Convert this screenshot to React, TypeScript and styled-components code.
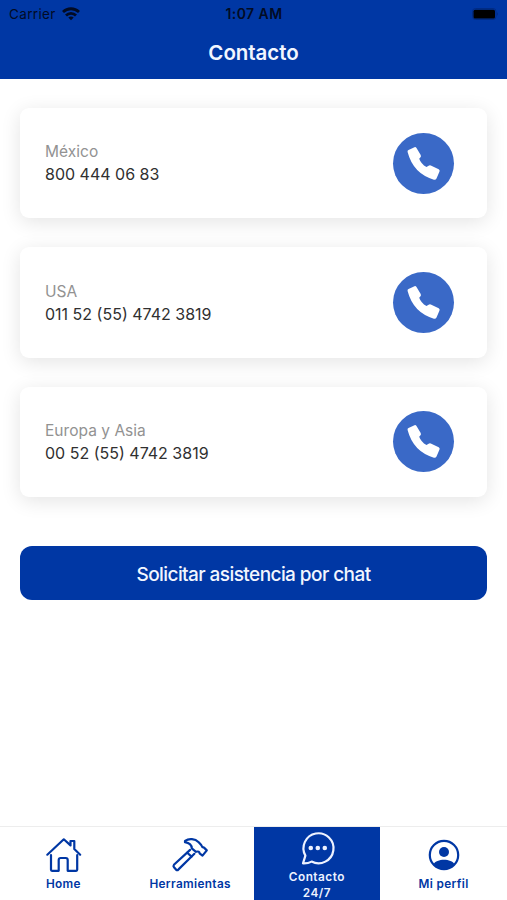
import React from "react";
import styled, { createGlobalStyle, css } from "styled-components";

const BLUE = "#0037a4";

const GlobalStyle = createGlobalStyle`
  * { box-sizing: border-box; }
  body { margin: 0; background: #fff; font-family: Inter, Roboto, sans-serif; }
`;

const Screen = styled.div`
  display: flex;
  flex-direction: column;
  width: 507px;
  height: 900px;
  overflow: hidden;
  background: #fff;
`;

const Header = styled.header`
  height: 79px;
  flex: none;
  background: ${BLUE};
`;

const StatusBar = styled.div`
  display: grid;
  grid-template-columns: 1fr auto 1fr;
  align-items: center;
  height: 27px;
  padding: 0 8px 0 9px;
  color: #020b24;
  line-height: 27px;
`;

const Carrier = styled.div`
  display: flex;
  align-items: center;
  gap: 6px;
  font-size: 13.5px;
  line-height: 28px;
  letter-spacing: 0.35px;
`;

const Clock = styled.div`
  font-weight: 600;
  font-size: 14px;
  line-height: 28px;
  letter-spacing: 0.45px;
`;

const BatterySlot = styled.div`
  display: flex;
  justify-content: flex-end;
`;

const Title = styled.h1`
  margin: 0;
  color: #f2f6ff;
  font-size: 20.5px;
  font-weight: 600;
  line-height: 51px;
  letter-spacing: -0.05px;
  text-align: center;
`;

const Content = styled.main`
  flex: 1;
  display: flex;
  flex-direction: column;
  padding: 29px 20px 0;
`;

const CardList = styled.div`
  display: flex;
  flex-direction: column;
  gap: 29px;
`;

const Card = styled.section`
  display: flex;
  align-items: center;
  justify-content: space-between;
  height: 110.4px;
  padding: 0 33px 0 25px;
  border-radius: 9px;
  background: #fff;
  box-shadow: 0 4px 20px rgba(0, 0, 0, 0.11);
`;

const Region = styled.div`
  color: #929292;
  font-size: 15.5px;
  line-height: 22px;
  letter-spacing: 0.03px;
`;

const Phone = styled.div`
  color: #303030;
  font-size: 16px;
  line-height: 22px;
`;

const CallButton = styled.button`
  display: flex;
  width: 61px;
  height: 61px;
  padding: 0;
  border: 0;
  border-radius: 50%;
  background: #3a69c7;
`;

const ChatButton = styled.button`
  height: 54px;
  margin-top: 49px;
  padding: 2px 0 0;
  border: 0;
  border-radius: 12px;
  background: ${BLUE};
  color: #f2f6ff;
  font-family: inherit;
  font-size: 19px;
  font-weight: 500;
  letter-spacing: -0.57px;
`;

const TabBar = styled.nav`
  display: grid;
  grid-template-columns: repeat(4, 1fr);
  flex: none;
  height: 74px;
  border-top: 1px solid #ededed;
`;

const Tab = styled.a<{ $active?: boolean }>`
  display: flex;
  flex-direction: column;
  align-items: center;
  padding-top: 8px;
  color: ${BLUE};
  font-size: 11.8px;
  font-weight: 600;
  line-height: 16px;
  letter-spacing: 0.35px;
  text-align: center;
  ${(p) =>
    p.$active &&
    css`
      padding-top: 1px;
      background: ${BLUE};
      color: #edf2ff;
      letter-spacing: 0.5px;
    `}
`;

const TabLabel = styled.span`
  padding-top: 1px;
`;

const TabIcon = styled.svg`
  flex: none;
  width: 40px;
  height: 40px;
  fill: none;
  stroke: currentColor;
  stroke-width: 2.2;
  stroke-linejoin: round;
  stroke-linecap: round;
`;

const contacts = [
  { region: "México", phone: "800 444 06 83" },
  { region: "USA", phone: "011 52 (55) 4742 3819" },
  { region: "Europa y Asia", phone: "00 52 (55) 4742 3819" },
];

const WifiIcon = () => (
  <svg width="18" height="14" viewBox="0 0 18 14" fill="none" stroke="currentColor" strokeWidth="2.8">
    <path d="M1 4.9C5.5 0.7 12.5 0.7 17 4.9" />
    <path d="M4 8.4C6.8 5.6 11.2 5.6 14 8.4" />
    <path d="M9 13.2L6.3 10.5C7.8 9.2 10.2 9.2 11.7 10.5Z" fill="currentColor" stroke="none" />
  </svg>
);

const BatteryIcon = () => (
  <svg width="27" height="12" viewBox="0 0 27 12">
    <rect x="0.5" y="0.5" width="23.5" height="11" rx="3" fill="none" stroke="#002b84" />
    <rect x="1.5" y="1.7" width="21.5" height="8.8" rx="1.5" fill="#000" />
    <path d="M25.3 4Q26.7 6 25.3 8Z" fill="#002575" />
  </svg>
);

const HandsetIcon = () => (
  <svg width="61" height="61" viewBox="0.5 0.5 61 61" fill="#fff">
    <path d="M16 17.4L22 14.7Q23.2 14.3 24 15.6L28.2 22.4Q28.9 23.9 27.8 24.9L26.7 26.2Q28.5 31.3 34 34.6L36.1 33.2Q37.2 32.5 38.3 33L46.2 36.8Q47.6 37.6 47 39L44 46Q43.2 47.6 41.4 47.2Q20.8 41.3 15.1 19.6Q14.7 18 16 17.4Z" />
  </svg>
);

const HomeIcon = () => (
  <TabIcon viewBox="0 0 40 40">
    <path d="M8 20.2V34.8Q8 35.8 9 35.8H15.7V25Q15.7 23 17.7 23H22.7Q24.7 23 24.7 25V35.8H33.2Q34.2 35.8 34.2 34.8V20.2" />
    <path d="M4.3 19.7L20.8 4.3L27.5 10.4V6H31.3V14L37.2 19.7" />
  </TabIcon>
);

const HammerIcon = () => (
  <TabIcon viewBox="0 0 40 40">
    <path d="M15 5.8C19 3.2 25 3.6 28.7 7.2L31.2 10Q31.8 12.3 34 12.6L36.8 15.4L32.5 20.6L29.6 18.3Q29.6 15.8 26 16.8L21.8 13.3C21.7 10.3 18.9 8 15 7.2Z" />
    <path d="M20.1 14.9L3.9 29.8Q3 31 4 32.2L6.2 34.8Q7.3 35.7 8.5 34.4L24.4 18.8" />
    <path d="M17.2 17.7L21.6 21.6" />
  </TabIcon>
);

const ChatIcon = () => (
  <TabIcon viewBox="0 0 40 40">
    <path d="M6 35.3L8.4 27.6A15 15 0 1 1 14.6 33.6Q11 35.5 6 35.3Z" />
    <g fill="currentColor" stroke="none">
      <circle cx="13.8" cy="20" r="2.3" />
      <circle cx="20.8" cy="20" r="2.3" />
      <circle cx="27.8" cy="20" r="2.3" />
    </g>
  </TabIcon>
);

const ProfileIcon = () => (
  <TabIcon viewBox="0 0 40 40">
    <circle cx="20" cy="20" r="14.2" />
    <circle cx="20" cy="17" r="5" fill="currentColor" stroke="none" />
    <path d="M9.5 29.2C12.3 23.2 27.7 23.2 30.5 29.2Q26.5 34.2 20 34.2Q13.5 34.2 9.5 29.2Z" fill="currentColor" stroke="none" />
  </TabIcon>
);

export default function App() {
  return (
    <>
      <GlobalStyle />
      <Screen>
        <Header>
          <StatusBar>
            <Carrier>
              Carrier
              <WifiIcon />
            </Carrier>
            <Clock>1:07 AM</Clock>
            <BatterySlot>
              <BatteryIcon />
            </BatterySlot>
          </StatusBar>
          <Title>Contacto</Title>
        </Header>
        <Content>
          <CardList>
            {contacts.map((c) => (
              <Card key={c.region}>
                <div>
                  <Region>{c.region}</Region>
                  <Phone>{c.phone}</Phone>
                </div>
                <CallButton aria-label={`Llamar ${c.region}`}>
                  <HandsetIcon />
                </CallButton>
              </Card>
            ))}
          </CardList>
          <ChatButton>Solicitar asistencia por chat</ChatButton>
        </Content>
        <TabBar>
          <Tab>
            <HomeIcon />
            <TabLabel>Home</TabLabel>
          </Tab>
          <Tab>
            <HammerIcon />
            <TabLabel>Herramientas</TabLabel>
          </Tab>
          <Tab $active>
            <ChatIcon />
            <TabLabel>
              Contacto
              <br />
              24/7
            </TabLabel>
          </Tab>
          <Tab>
            <ProfileIcon />
            <TabLabel>Mi perfil</TabLabel>
          </Tab>
        </TabBar>
      </Screen>
    </>
  );
}
